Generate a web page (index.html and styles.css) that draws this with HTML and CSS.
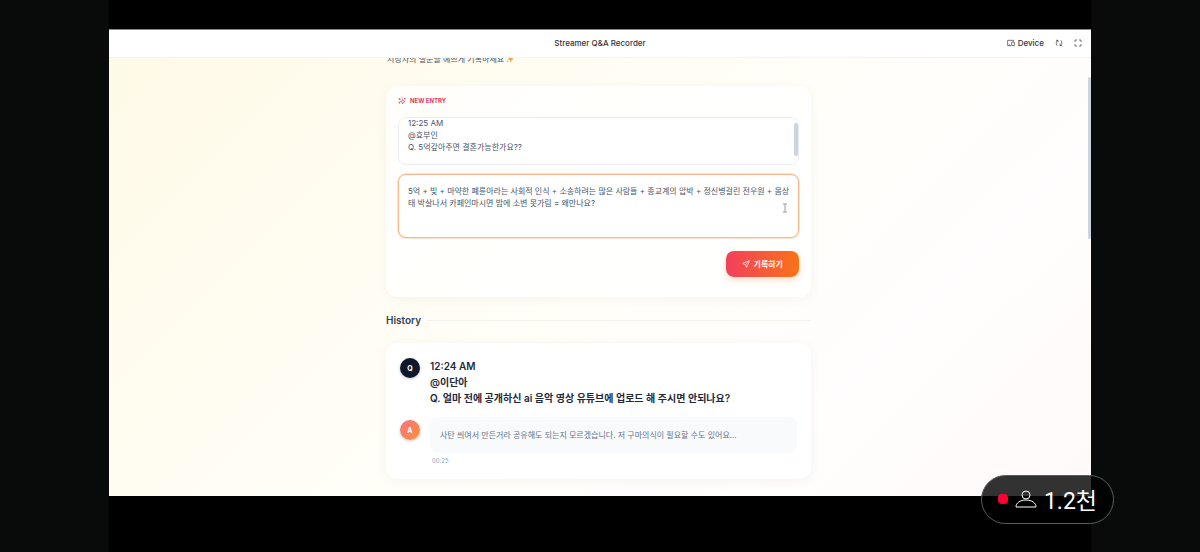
FILE: index.html
```html
<!DOCTYPE html>
<html lang="ko">
<head>
  <meta charset="UTF-8">
  <meta name="viewport" content="width=device-width, initial-scale=1.0">
  <title>Streamer Q&amp;A Recorder</title>
  <link rel="stylesheet" href="styles.css">
</head>
<body>
  <div class="stage">
    <main class="video">
      <header class="toolbar">
        <h1>Streamer Q&amp;A Recorder</h1>
        <div class="tools">
          <button type="button" class="device">
            <svg viewBox="0 0 24 24"><path d="M20 7V4H2v16h10M14 9h8v11h-8zM7 20v-4"/></svg>
            Device
          </button>
          <button type="button" aria-label="새로고침">
            <svg viewBox="0 0 24 24"><path d="M3 4h6v6M9 4c-6 3-7 10-3 16M21 20h-6v-6M15 20c6-3 7-10 3-16"/></svg>
          </button>
          <button type="button" aria-label="전체 화면">
            <svg viewBox="0 0 24 24"><path d="M3 9V3h6M15 3h6v6M21 15v6h-6M9 21H3v-6"/></svg>
          </button>
        </div>
      </header>

      <div class="viewport">
        <div class="page" id="page">
          <div class="column">
            <p class="subtitle">시청자의 질문을 예쁘게 기록하세요
              <svg viewBox="0 0 24 24"><path d="M14 1l3 8 7 3-7 3-3 8-3-8-7-3 7-3zM5 1l1 3 3 1-3 1-1 3-1-3-3-1 3-1zM5 15l1 3 3 1-3 1-1 3-1-3-3-1 3-1z"/></svg>
            </p>

            <form class="card entry">
              <h2 class="entry-title">
                <svg viewBox="0 0 24 24"><path d="M14 7l2 5 5 2-5 2-2 5-2-5-5-2 5-2zM5 3v6M2 6h6M12 1l1 3M20 3v5M18 5h5M4 14v6M2 17h4"/></svg>
                NEW ENTRY
              </h2>
              <div class="question-box">
                <textarea id="question" class="question" aria-label="질문">12:25 AM
@효부인
Q. 5억갚아주면 결혼가능한가요??
</textarea>
                <span class="thumb"></span>
              </div>
              <textarea id="answer" class="answer" aria-label="답변">5억 + 빚 + 마약한 폐륜아라는 사회적 인식 + 소송하려는 많은 사람들 + 종교계의 압박 + 정신병걸린 전우원 + 몸상태 박살나서 카페인마시면 밤에 소변 못가림 = 왜만나요?</textarea>
              <button type="submit" class="submit">
                <svg viewBox="0 0 24 24"><path d="M22 2L2 10l8 4 4 8zM22 2L10 14"/></svg>
                기록하기
              </button>
              <svg class="pointer" viewBox="0 0 6 10"><path d="M1 1h4M3 1v8M1 9h4"/></svg>
            </form>

            <h2 class="history-title">History</h2>

            <article class="card item">
              <span class="badge badge-q">Q</span>
              <p class="item-question">12:24 AM<br>@이단아<br>Q. 얼마 전에 공개하신 ai 음악 영상 유튜브에 업로드 해 주시면 안되나요?</p>
              <span class="badge badge-a">A</span>
              <div>
                <p class="item-answer">사탄 씌여서 만든거라 공유해도 되는지 모르겠습니다. 저 구마의식이 필요할 수도 있어요...</p>
                <time>00:25</time>
              </div>
            </article>
          </div>
        </div>
        <span class="page-thumb"></span>
      </div>
    </main>
  </div>

  <div class="viewers">
    <span class="live-dot"></span>
    <svg viewBox="0 0 22 20"><circle cx="11" cy="6" r="4"/><path d="M1 18c0-4 4-7 10-7s10 3 10 7z"/></svg>
    <span>1.2천</span>
  </div>

  <script>
    const answer = document.getElementById('answer');
    answer.focus({ preventScroll: true });
    answer.setSelectionRange(answer.value.length, answer.value.length);
    document.getElementById('question').scrollTop = 11;
    document.getElementById('page').scrollTop = 51;
  </script>
</body>
</html>
```
FILE: styles.css
```css
* {
  box-sizing: border-box;
}
body {
  margin: 0;
  background: #080b0a;
  font-family: Inter, 'Noto Sans CJK KR', sans-serif;
  color: #475569;
  overflow: hidden;
}
h1, h2, p {
  margin: 0;
}
button {
  font-family: inherit;
  border: none;
  cursor: pointer;
}
svg {
  fill: none;
  stroke: currentColor;
  stroke-width: 2;
}
.stage {
  display: grid;
  grid-template-columns: 1fr 9fr 1fr;
  height: 100vh;
}
.video {
  grid-column: 2;
  display: flex;
  flex-direction: column;
  min-height: 0;
  padding: 29px 0 56px;
  background: #000;
}

/* toolbar */
.toolbar {
  display: grid;
  grid-template-columns: 1fr auto 1fr;
  align-items: center;
  flex: 0 0 29px;
  padding: 0 9px 1px;
  background: #fff;
  border-top: 1px solid #888;
  border-bottom: 1px solid #f3f3f1;
  color: #333;
}
.toolbar h1 {
  grid-column: 2;
  font-size: 8px;
  font-weight: 500;
}
.tools {
  display: flex;
  justify-content: flex-end;
  gap: 11px;
}
.tools button {
  display: flex;
  align-items: center;
  gap: 3px;
  padding: 0;
  background: none;
  color: #333;
  font-size: 8px;
  font-weight: 500;
}
.tools svg {
  width: 8px;
  height: 8px;
}

/* scrolling page */
.viewport {
  position: relative;
  flex: 1;
  min-height: 0;
  background: linear-gradient(135deg, #fffae7 0%, #fffcf0 25%, #fffef8 50%, #fffdfd 75%, #fffafa 100%);
}
.page {
  height: 100%;
  padding-right: 3px;
  overflow-y: auto;
  scrollbar-width: none;
}
.page-thumb {
  position: absolute;
  top: 19px;
  right: 0;
  width: 3px;
  height: 37%;
  border-radius: 2px;
  background: #cbd5e1;
}
.column {
  max-width: 425px;
  min-height: 1184px;
  margin: 0 auto;
  padding-top: 46px;
}
.subtitle {
  padding-left: 1px;
  font-size: 8px;
  line-height: 13px;
}
.subtitle svg {
  width: 8px;
  height: 8px;
  vertical-align: -1px;
  fill: #f5a54a;
  stroke: none;
}
.card {
  background: #fff;
  border-radius: 12px;
  box-shadow: 0 2px 12px rgba(100, 90, 60, 0.06);
}
.entry {
  position: relative;
  display: flex;
  flex-direction: column;
  margin-top: 20px;
  padding: 9px 12px 20px;
  background: rgba(255, 255, 255, 0.75);
}
.entry-title {
  display: flex;
  align-items: center;
  gap: 4px;
  margin-bottom: 10px;
  color: #dc3b5f;
  font-size: 6px;
  line-height: 12px;
}
.entry-title svg {
  width: 8px;
  height: 8px;
}
textarea {
  display: block;
  width: 100%;
  padding: 10px 6px 10px 9px;
  border: 1px solid #e9edf3;
  border-radius: 8px;
  background: #fff;
  color: #475569;
  font-family: inherit;
  font-size: 8px;
  line-height: 12px;
  resize: none;
  outline: none;
}
.question-box {
  position: relative;
  margin-bottom: 9px;
}
.question {
  height: 48px;
  scrollbar-width: none;
}
.thumb {
  position: absolute;
  top: 6px;
  right: 1px;
  width: 4px;
  height: 33px;
  border-radius: 2px;
  background: #cbd5e1;
}
.answer {
  height: 64px;
  margin-bottom: 13px;
}
.answer:focus {
  border-color: #f7b78c;
  box-shadow: 0 0 0 1px #fde3d0;
}
.submit {
  display: flex;
  align-items: center;
  align-self: flex-end;
  gap: 4px;
  height: 26px;
  padding: 0 16px 1px;
  border-radius: 8px;
  background: linear-gradient(90deg, #f43f5e, #f97316);
  box-shadow: 0 3px 6px rgba(249, 115, 22, 0.25);
  color: #fff;
  font-size: 8px;
  font-weight: 700;
}
.submit svg {
  width: 8px;
  height: 8px;
}
/* text cursor over the answer box */
.pointer {
  position: absolute;
  top: 117px;
  right: 23px;
  width: 6px;
  height: 10px;
  color: #999;
  stroke-width: 1;
}

/* history */
.history-title {
  display: flex;
  align-items: center;
  gap: 7px;
  margin: 15px 0;
  color: #334155;
  font-size: 10px;
  font-weight: 600;
  line-height: 16px;
}
.history-title::after {
  content: '';
  flex: 1;
  height: 1px;
  background: #f3f2ed;
}
.item {
  display: grid;
  grid-template-columns: 20px 1fr;
  gap: 11px 10px;
  padding: 15px 14px 12px;
}
.badge {
  display: flex;
  align-items: center;
  justify-content: center;
  width: 20px;
  height: 20px;
  border-radius: 50%;
  color: #fff;
  font-size: 7px;
  font-weight: 700;
  box-shadow: 0 1px 3px rgba(15, 23, 42, 0.25);
}
.badge-q {
  background: #0f172a;
}
.badge-a {
  margin-top: 3px;
  background: linear-gradient(135deg, #fb7180, #fb923c);
}
.item-question {
  color: #1e293b;
  font-size: 10px;
  font-weight: 600;
  line-height: 16px;
}
.item-answer {
  padding: 12px 10px;
  border-radius: 8px;
  background: #f8fafc;
  color: #64748b;
  font-size: 8px;
  line-height: 12px;
}
time {
  display: block;
  margin-top: 2px;
  padding-left: 2px;
  color: #94a3b8;
  font-size: 6px;
  line-height: 12px;
}

/* live viewer count over the video */
.viewers {
  position: absolute;
  right: 86px;
  bottom: 28px;
  display: flex;
  align-items: center;
  gap: 7px;
  height: 49px;
  padding: 0 16px 2px;
  border: 1px solid #5c5c5c;
  border-radius: 25px;
  background: rgba(0, 0, 0, 0.8);
  color: #fff;
  font-family: Roboto, 'Noto Sans CJK KR', sans-serif;
  font-size: 23px;
}
.viewers svg {
  width: 22px;
  height: 20px;
  stroke-width: 1;
}
.live-dot {
  width: 10px;
  height: 10px;
  border-radius: 4px;
  background: #ff0033;
}
```
